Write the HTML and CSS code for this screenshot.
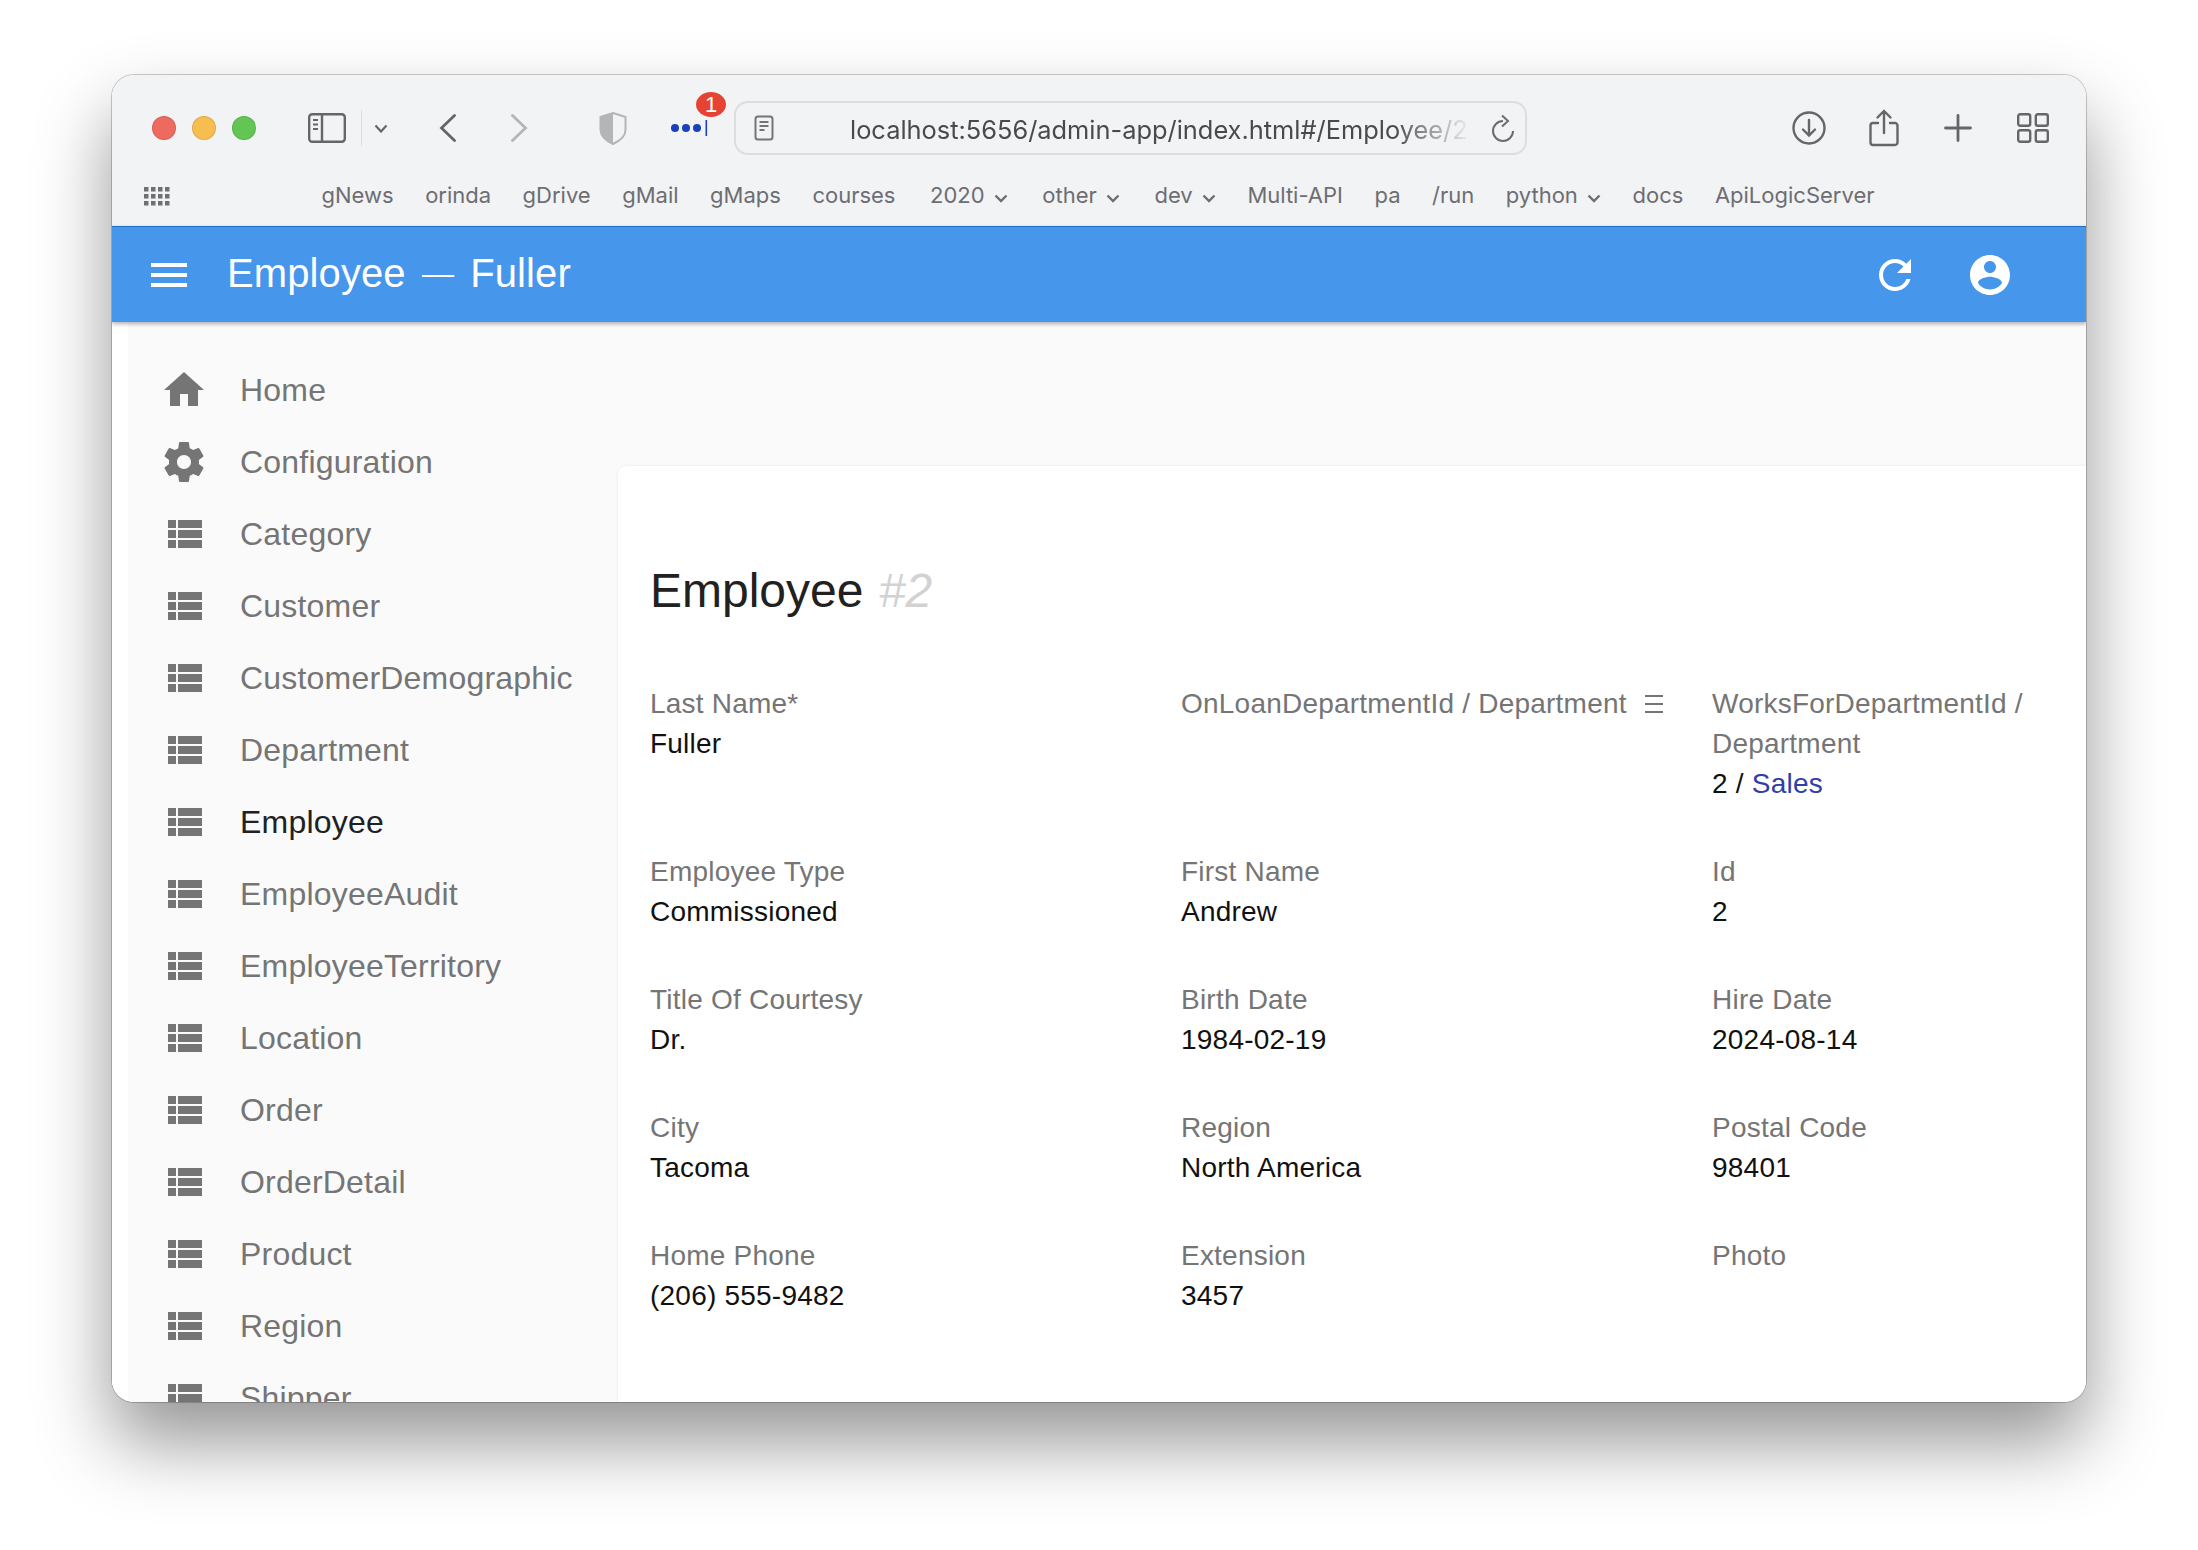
FILE: index.html
```html
<!DOCTYPE html>
<html lang="en">
<head>
    <meta charset="UTF-8">
    <title>Employee - Fuller</title>
    <link rel="stylesheet" href="styles.css">
</head>
<body>
    <div class="window">
        <div class="toolbar">
            <span class="light light-red"></span>
            <span class="light light-yellow"></span>
            <span class="light light-green"></span>
            <svg class="tb-sidebar" width="38" height="30" viewBox="0 0 38 30" fill="none" stroke="#666" stroke-width="2.4">
                <rect x="1.2" y="1.2" width="35.6" height="27.6" rx="3"/>
                <path d="M14 1.2v27.6"/>
                <path d="M5 7h5M5 11.5h5M5 16h5" stroke-width="2"/>
            </svg>
            <span class="tb-sep"></span>
            <svg class="tb-chev" width="14" height="9" viewBox="0 0 14 9" fill="none" stroke="#666" stroke-width="2.2"><path d="M1.5 1.5l5.5 6 5.5-6"/></svg>
            <svg class="tb-back" width="18" height="28" viewBox="0 0 18 28" fill="none" stroke="#666" stroke-width="2.8" stroke-linecap="round"><path d="M15.5 1.5L2.5 14l13 12.500"/></svg>
            <svg class="tb-forward" width="18" height="28" viewBox="0 0 18 28" fill="none" stroke="#b5b5b7" stroke-width="2.8" stroke-linecap="round"><path d="M2.500 1.5L15.500 14l-13 12.500"/></svg>
            <svg class="tb-shield" width="28" height="33" viewBox="0 0 28 33"><path d="M14 1l12.500 4v13c0 6-5 10.500-12.500 14C6.500 28.500 1.500 24 1.500 18V5z" fill="none" stroke="#b4b5b7" stroke-width="2"/><path d="M14 1L1.500 5v13c0 6 5 10.500 12.500 14z" fill="#b4b5b7"/></svg>
            <div class="tb-dots">
                <svg width="38" height="18" viewBox="0 0 38 18" fill="#1a41bd"><circle cx="5" cy="9" r="4"/><circle cx="16" cy="9" r="4"/><circle cx="27" cy="9" r="4"/><rect x="35.500" y="1" width="1.600" height="16"/></svg>
                <span class="badge">1</span>
            </div>
            <div class="urlbar">
                <svg class="url-doc" width="20" height="26" viewBox="0 0 20 26" fill="none" stroke="#747474" stroke-width="2"><rect x="1.500" y="1.500" width="17" height="23" rx="2.500"/><path d="M5.500 7h9M5.500 11h9M5.500 15h5"/></svg>
                <span class="url-text">localhost:5656/admin-app/index.html#/Employee/2</span>
                <svg class="url-reload" width="22" height="28" viewBox="0 0 22 28" fill="none" stroke="#6c6c6c" stroke-width="2"><path d="M11 7A10 10 0 1 0 21 17"/><path d="M10 1.500L16 7l-6 5.500"/></svg>
            </div>
            <svg class="tb-download" width="34" height="34" viewBox="0 0 34 34" fill="none" stroke="#666" stroke-width="2.4" stroke-linecap="round"><circle cx="17" cy="17" r="15.500"/><path d="M17 9v15M11 18.500l6 6 6-6"/></svg>
            <svg class="tb-share" width="30" height="38" viewBox="0 0 30 38" fill="none" stroke="#666" stroke-width="2.400" stroke-linecap="round"><path d="M9 14H4a2.500 2.500 0 0 0-2.500 2.500v17A2.500 2.500 0 0 0 4 36h22a2.500 2.500 0 0 0 2.500-2.500v-17A2.500 2.500 0 0 0 26 14h-5"/><path d="M15 24V2M8.500 8.500L15 2l6.500 6.500"/></svg>
            <svg class="tb-plus" width="28" height="28" viewBox="0 0 28 28" fill="none" stroke="#666" stroke-width="2.800" stroke-linecap="round"><path d="M14 1.500v25M1.500 14h25"/></svg>
            <svg class="tb-tabs" width="32" height="30" viewBox="0 0 32 30" fill="none" stroke="#666" stroke-width="2.400"><rect x="1.200" y="1.200" width="12" height="11.500" rx="2"/><rect x="18.800" y="1.200" width="12" height="11.500" rx="2"/><rect x="1.200" y="17.300" width="12" height="11.500" rx="2"/><rect x="18.800" y="17.300" width="12" height="11.500" rx="2"/></svg>
        </div>
        <div class="bookmarks">
            <svg class="bm-grid" width="26" height="19" viewBox="0 0 26 19" fill="#707074">
                <rect x="0" y="0" width="4.500" height="4.500"/><rect x="7" y="0" width="4.500" height="4.500"/><rect x="14" y="0" width="4.500" height="4.500"/><rect x="21" y="0" width="4.500" height="4.500"/>
                <rect x="0" y="7" width="4.500" height="4.500"/><rect x="7" y="7" width="4.500" height="4.500"/><rect x="14" y="7" width="4.500" height="4.500"/><rect x="21" y="7" width="4.500" height="4.500"/>
                <rect x="0" y="14" width="4.500" height="4.500"/><rect x="7" y="14" width="4.500" height="4.500"/><rect x="14" y="14" width="4.500" height="4.500"/><rect x="21" y="14" width="4.500" height="4.500"/>
            </svg>
            <span>gNews</span>
            <span>orinda</span>
            <span>gDrive</span>
            <span>gMail</span>
            <span>gMaps</span>
            <span>courses</span>
            <span class="bm-folder">2020 <svg width="14" height="9" viewBox="0 0 14 9" fill="none" stroke="#6d6d72" stroke-width="2.400"><path d="M1.500 1.500l5.500 5.500 5.500-5.500"/></svg></span>
            <span class="bm-folder">other <svg width="14" height="9" viewBox="0 0 14 9" fill="none" stroke="#6d6d72" stroke-width="2.400"><path d="M1.500 1.500l5.500 5.500 5.500-5.500"/></svg></span>
            <span class="bm-folder">dev <svg width="14" height="9" viewBox="0 0 14 9" fill="none" stroke="#6d6d72" stroke-width="2.400"><path d="M1.500 1.500l5.500 5.500 5.500-5.500"/></svg></span>
            <span>Multi-API</span>
            <span>pa</span>
            <span>/run</span>
            <span class="bm-folder bm-tight">python <svg width="14" height="9" viewBox="0 0 14 9" fill="none" stroke="#6d6d72" stroke-width="2.400"><path d="M1.500 1.500l5.500 5.500 5.500-5.500"/></svg></span>
            <span>docs</span>
            <span>ApiLogicServer</span>
        </div>

        <div class="appbar">
            <svg class="appbar-menu" width="48" height="48" viewBox="0 0 24 24" fill="#fff"><path d="M3 18h18v-2H3v2zm0-5h18v-2H3v2zm0-7v2h18V6H3z"/></svg>
            <div class="appbar-title">Employee <span class="appbar-dash">—</span> Fuller</div>
            <svg class="appbar-refresh" width="48" height="48" viewBox="0 0 24 24" fill="#fff"><path d="M17.650 6.350C16.200 4.900 14.210 4 12 4c-4.420 0-7.990 3.580-7.990 8s3.570 8 7.990 8c3.730 0 6.840-2.550 7.730-6h-2.080c-.82 2.330-3.040 4-5.650 4-3.310 0-6-2.690-6-6s2.690-6 6-6c1.660 0 3.140.69 4.220 1.780L13 11h7V4l-2.350 2.350z"/></svg>
            <svg class="appbar-user" width="48" height="48" viewBox="0 0 24 24" fill="#fff"><path d="M12 2C6.480 2 2 6.480 2 12s4.480 10 10 10 10-4.480 10-10S17.520 2 12 2zm0 3c1.660 0 3 1.340 3 3s-1.340 3-3 3-3-1.340-3-3 1.340-3 3-3zm0 14.200c-2.500 0-4.710-1.280-6-3.220.03-1.990 4-3.080 6-3.080 1.990 0 5.970 1.090 6 3.080-1.290 1.940-3.500 3.220-6 3.220z"/></svg>
        </div>

        <div class="layout">
            <nav class="sidebar">
                <a class="nav-item"><svg width="48" height="48" viewBox="0 0 24 24"><path d="M10 20v-6h4v6h5v-8h3L12 3 2 12h3v8z"/></svg>Home</a>
                <a class="nav-item"><svg width="48" height="48" viewBox="0 0 24 24"><path d="M19.430 12.980c.04-.32.07-.64.07-.98s-.03-.66-.07-.98l2.110-1.650c.19-.15.24-.42.12-.64l-2-3.460c-.12-.22-.39-.3-.61-.22l-2.490 1c-.52-.4-1.080-.73-1.690-.98l-.38-2.650C14.460 2.180 14.250 2 14 2h-4c-.25 0-.46.18-.49.420l-.38 2.650c-.61.25-1.170.59-1.690.98l-2.490-1c-.23-.09-.49 0-.61.22l-2 3.460c-.13.22-.07.49.12.64l2.110 1.650c-.04.32-.07.65-.07.98s.03.66.07.98l-2.110 1.650c-.19.15-.24.42-.12.64l2 3.460c.12.22.39.3.61.22l2.490-1c.52.4 1.080.73 1.690.98l.38 2.650c.03.24.24.42.49.42h4c.25 0 .46-.18.49-.42l.38-2.650c.61-.25 1.170-.59 1.690-.98l2.490 1c.23.09.49 0 .61-.22l2-3.460c.12-.22.07-.49-.12-.64l-2.110-1.650zM12 15.500c-1.930 0-3.500-1.570-3.500-3.500s1.570-3.500 3.500-3.500 3.500 1.570 3.500 3.500-1.570 3.500-3.500 3.500z"/></svg>Configuration</a>
                <a class="nav-item"><svg width="48" height="48" viewBox="0 0 24 24"><path d="M4 14h4v-4H4v4zm0 5h4v-4H4v4zM4 9h4V5H4v4zm5 5h12v-4H9v4zm0 5h12v-4H9v4zM9 5v4h12V5H9z"/></svg>Category</a>
                <a class="nav-item"><svg width="48" height="48" viewBox="0 0 24 24"><path d="M4 14h4v-4H4v4zm0 5h4v-4H4v4zM4 9h4V5H4v4zm5 5h12v-4H9v4zm0 5h12v-4H9v4zM9 5v4h12V5H9z"/></svg>Customer</a>
                <a class="nav-item"><svg width="48" height="48" viewBox="0 0 24 24"><path d="M4 14h4v-4H4v4zm0 5h4v-4H4v4zM4 9h4V5H4v4zm5 5h12v-4H9v4zm0 5h12v-4H9v4zM9 5v4h12V5H9z"/></svg>CustomerDemographic</a>
                <a class="nav-item"><svg width="48" height="48" viewBox="0 0 24 24"><path d="M4 14h4v-4H4v4zm0 5h4v-4H4v4zM4 9h4V5H4v4zm5 5h12v-4H9v4zm0 5h12v-4H9v4zM9 5v4h12V5H9z"/></svg>Department</a>
                <a class="nav-item active"><svg width="48" height="48" viewBox="0 0 24 24"><path d="M4 14h4v-4H4v4zm0 5h4v-4H4v4zM4 9h4V5H4v4zm5 5h12v-4H9v4zm0 5h12v-4H9v4zM9 5v4h12V5H9z"/></svg>Employee</a>
                <a class="nav-item"><svg width="48" height="48" viewBox="0 0 24 24"><path d="M4 14h4v-4H4v4zm0 5h4v-4H4v4zM4 9h4V5H4v4zm5 5h12v-4H9v4zm0 5h12v-4H9v4zM9 5v4h12V5H9z"/></svg>EmployeeAudit</a>
                <a class="nav-item"><svg width="48" height="48" viewBox="0 0 24 24"><path d="M4 14h4v-4H4v4zm0 5h4v-4H4v4zM4 9h4V5H4v4zm5 5h12v-4H9v4zm0 5h12v-4H9v4zM9 5v4h12V5H9z"/></svg>EmployeeTerritory</a>
                <a class="nav-item"><svg width="48" height="48" viewBox="0 0 24 24"><path d="M4 14h4v-4H4v4zm0 5h4v-4H4v4zM4 9h4V5H4v4zm5 5h12v-4H9v4zm0 5h12v-4H9v4zM9 5v4h12V5H9z"/></svg>Location</a>
                <a class="nav-item"><svg width="48" height="48" viewBox="0 0 24 24"><path d="M4 14h4v-4H4v4zm0 5h4v-4H4v4zM4 9h4V5H4v4zm5 5h12v-4H9v4zm0 5h12v-4H9v4zM9 5v4h12V5H9z"/></svg>Order</a>
                <a class="nav-item"><svg width="48" height="48" viewBox="0 0 24 24"><path d="M4 14h4v-4H4v4zm0 5h4v-4H4v4zM4 9h4V5H4v4zm5 5h12v-4H9v4zm0 5h12v-4H9v4zM9 5v4h12V5H9z"/></svg>OrderDetail</a>
                <a class="nav-item"><svg width="48" height="48" viewBox="0 0 24 24"><path d="M4 14h4v-4H4v4zm0 5h4v-4H4v4zM4 9h4V5H4v4zm5 5h12v-4H9v4zm0 5h12v-4H9v4zM9 5v4h12V5H9z"/></svg>Product</a>
                <a class="nav-item"><svg width="48" height="48" viewBox="0 0 24 24"><path d="M4 14h4v-4H4v4zm0 5h4v-4H4v4zM4 9h4V5H4v4zm5 5h12v-4H9v4zm0 5h12v-4H9v4zM9 5v4h12V5H9z"/></svg>Region</a>
                <a class="nav-item"><svg width="48" height="48" viewBox="0 0 24 24"><path d="M4 14h4v-4H4v4zm0 5h4v-4H4v4zM4 9h4V5H4v4zm5 5h12v-4H9v4zm0 5h12v-4H9v4zM9 5v4h12V5H9z"/></svg>Shipper</a>
            </nav>
            <main class="card">
                <h1 class="card-title">Employee <em>#2</em></h1>
                <div class="fields">
                    <div class="field">
                        <div class="label">Last Name*</div>
                        <div class="value">Fuller</div>
                    </div>
                    <div class="field">
                        <div class="label">OnLoanDepartmentId / Department <svg class="label-menu" width="18" height="18" viewBox="0 0 18 18" fill="#757575"><rect x="0" y="0" width="18" height="2"/><rect x="0" y="8" width="18" height="2"/><rect x="0" y="16" width="18" height="2"/></svg></div>
                    </div>
                    <div class="field">
                        <div class="label">WorksForDepartmentId / Department</div>
                        <div class="value">2 / <a class="link">Sales</a></div>
                    </div>
                    <div class="field">
                        <div class="label">Employee Type</div>
                        <div class="value">Commissioned</div>
                    </div>
                    <div class="field">
                        <div class="label">First Name</div>
                        <div class="value">Andrew</div>
                    </div>
                    <div class="field">
                        <div class="label">Id</div>
                        <div class="value">2</div>
                    </div>
                    <div class="field">
                        <div class="label">Title Of Courtesy</div>
                        <div class="value">Dr.</div>
                    </div>
                    <div class="field">
                        <div class="label">Birth Date</div>
                        <div class="value">1984-02-19</div>
                    </div>
                    <div class="field">
                        <div class="label">Hire Date</div>
                        <div class="value">2024-08-14</div>
                    </div>
                    <div class="field">
                        <div class="label">City</div>
                        <div class="value">Tacoma</div>
                    </div>
                    <div class="field">
                        <div class="label">Region</div>
                        <div class="value">North America</div>
                    </div>
                    <div class="field">
                        <div class="label">Postal Code</div>
                        <div class="value">98401</div>
                    </div>
                    <div class="field">
                        <div class="label">Home Phone</div>
                        <div class="value">(206) 555-9482</div>
                    </div>
                    <div class="field">
                        <div class="label">Extension</div>
                        <div class="value">3457</div>
                    </div>
                    <div class="field">
                        <div class="label">Photo</div>
                    </div>
                </div>
            </main>
        </div>
    </div>
</body>
</html>
```

FILE: styles.css
```css
html, body {
    margin: 0;
    padding: 0;
    background: #fff;
}

body {
    height: 1550px;
    overflow: hidden;
    font-family: "Liberation Sans", Arial, sans-serif;
}

.window {
    width: 1974px;
    height: 1327px;
    margin: 75px 0 0 112px;
    border-radius: 22px;
    overflow: hidden;
    display: flex;
    flex-direction: column;
    background: #fff;
    box-shadow: 0 0 0 1px rgba(0, 0, 0, 0.2), 0 40px 75px rgba(0, 0, 0, 0.42);
}

/* browser chrome */
.toolbar {
    height: 104px;
    flex: none;
    display: flex;
    align-items: center;
    box-sizing: border-box;
    padding: 2px 0 0 40px;
    background: #f2f3f5;
}
.toolbar svg {
    flex: none;
}

.light {
    width: 24px;
    height: 24px;
    border-radius: 50%;
    margin-right: 16px;
    box-sizing: border-box;
    border: 1px solid rgba(0, 0, 0, 0.1);
}
.light-red { background: #ee6a5f; }
.light-yellow { background: #f5be4f; }
.light-green { background: #62c554; margin-right: 0; }

.tb-sidebar { margin-left: 52px; }
.tb-sep {
    width: 1px;
    height: 36px;
    background: #dcdddf;
    margin-left: 15px;
}
.tb-chev { margin-left: 12px; }
.tb-back { margin-left: 51px; }
.tb-forward { margin-left: 53px; }
.tb-shield { margin-left: 71px; }

.tb-dots {
    position: relative;
    width: 38px;
    height: 18px;
    margin-left: 43px;
}
.badge {
    position: absolute;
    left: 26px;
    top: -27px;
    width: 30px;
    height: 25px;
    border-radius: 50%;
    background: #e54434;
    color: #fff;
    font-size: 22px;
    line-height: 25px;
    text-align: center;
}

.urlbar {
    width: 793px;
    height: 54px;
    margin-left: 26px;
    box-sizing: border-box;
    display: flex;
    align-items: center;
    border: 2px solid #dcddde;
    border-radius: 14px;
}
.url-doc { margin-left: 18px; }
.url-text {
    width: 626px;
    margin: 2px 0 0 76px;
    overflow: hidden;
    white-space: nowrap;
    color: #4a4a4c;
    font-family: Inter, "Liberation Sans", sans-serif;
    font-size: 25.4px;
    -webkit-mask-image: linear-gradient(to right, #000 87%, rgba(0, 0, 0, 0.1) 98%);
    mask-image: linear-gradient(to right, #000 87%, rgba(0, 0, 0, 0.1) 98%);
}
.url-reload { margin-left: 16px; }

.tb-download { margin-left: 265px; }
.tb-share { margin-left: 43px; }
.tb-plus { margin-left: 45px; }
.tb-tabs { margin-left: 45px; }

.bookmarks {
    height: 47px;
    flex: none;
    display: flex;
    align-items: flex-start;
    gap: 31.5px;
    padding-left: 32px;
    background: #f2f3f5;
    color: #6d6d72;
    font-family: Inter, "Liberation Sans", sans-serif;
    font-size: 22px;
    line-height: 33px;
    white-space: nowrap;
}
.bm-grid {
    margin: 8px 120px 0 0;
}
.bm-folder {
    margin-left: 3px;
}
.bm-folder svg {
    margin-left: 3px;
}
.bm-tight {
    margin-left: 0;
}

/* app bar */
.appbar {
    height: 96px;
    flex: none;
    display: flex;
    align-items: center;
    position: relative;
    box-sizing: border-box;
    border-top: 1px solid #1f6dc4;
    background: #4696ec;
    box-shadow: 0 2px 4px rgba(0, 0, 0, 0.3);
    color: #fff;
}
.appbar-menu { margin-left: 33px; }
.appbar-title {
    margin: 0 0 3px 34px;
    font-size: 40px;
    letter-spacing: 0.1px;
    flex: 1;
}
.appbar-dash {
    font-size: 32px;
    margin: 0 5px;
    vertical-align: 3px;
}
.appbar-user {
    margin: 0 72px 0 47px;
}

.layout {
    flex: 1;
    min-height: 0;
    display: flex;
    overflow: hidden;
    border-left: 16px solid #fff;
    background: #fafafa;
}

.sidebar {
    width: 490px;
    flex: none;
    box-sizing: border-box;
    padding-top: 32px;
}
.nav-item {
    height: 72px;
    display: flex;
    align-items: center;
    padding-left: 32px;
    color: #757575;
    font-size: 32px;
    letter-spacing: 0.2px;
}
.nav-item svg {
    flex: none;
    margin-right: 32px;
    fill: #757575;
}
.nav-item.active {
    color: #212121;
}

.card {
    flex: 1;
    margin-top: 144px;
    box-sizing: border-box;
    padding: 97px 32px 0;
    background: #fff;
    border-top-left-radius: 8px;
    box-shadow: 0 0 3px rgba(0, 0, 0, 0.08);
}
.card-title {
    margin: 0 0 65px;
    font-size: 48px;
    font-weight: 400;
    line-height: 56px;
    color: #212121;
}
.card-title em {
    margin-left: 2px;
    color: #d2d2d2;
}

.fields {
    display: grid;
    grid-template-columns: 531px 531px auto;
    row-gap: 48px;
}
.field {
    font-size: 28px;
    line-height: 40px;
    letter-spacing: 0.22px;
}
.label {
    color: #757575;
}
.label-menu {
    margin-left: 10px;
}
.value {
    color: #111;
}
.link {
    color: #2f3fa8;
}
```
